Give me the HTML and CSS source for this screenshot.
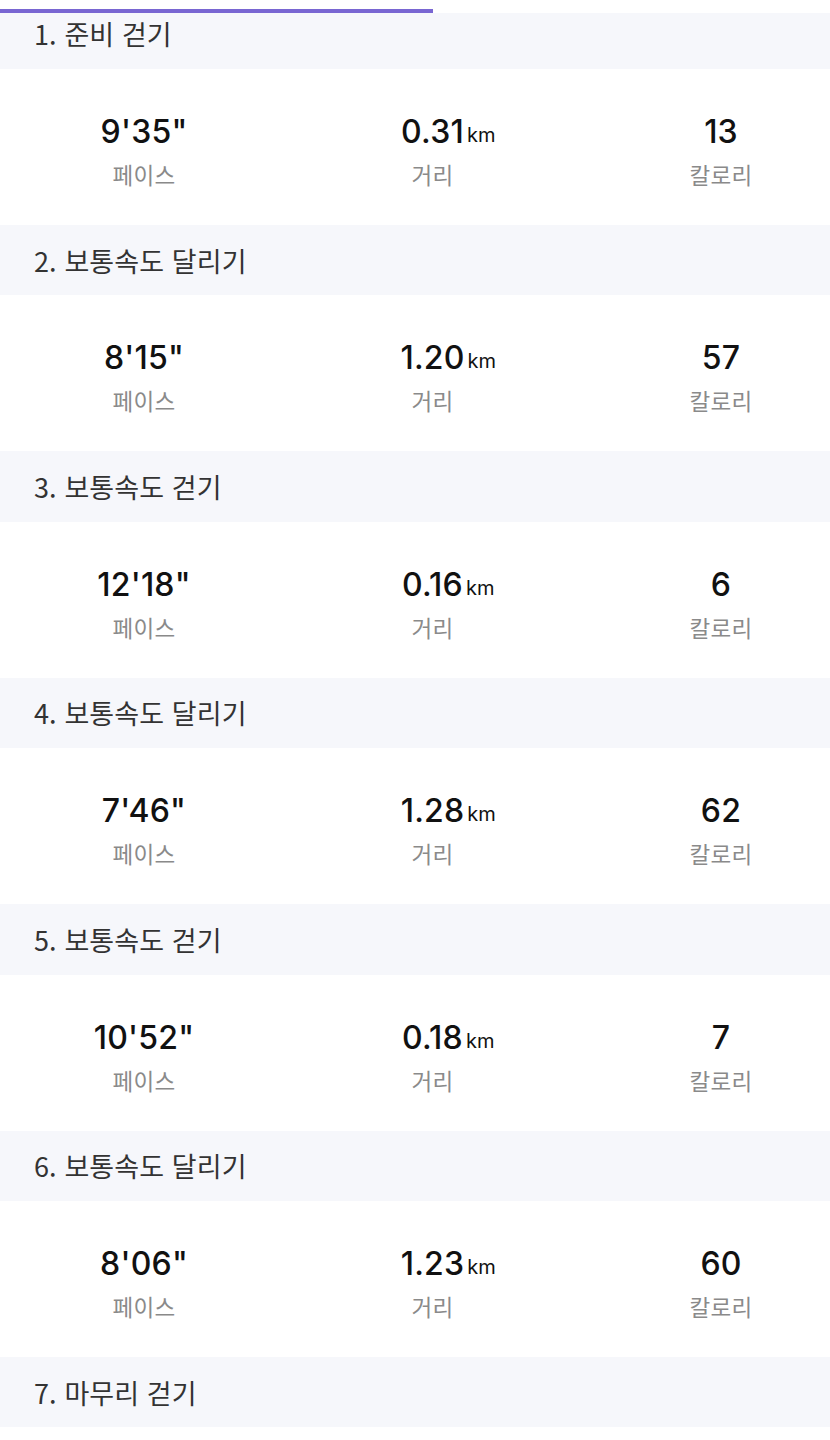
FILE: index.html
```html
<!DOCTYPE html>
<html lang="ko">
<head>
<meta charset="utf-8">
<link rel="stylesheet" href="styles.css">
</head>
<body>
<div class="topbar"><div class="progress"></div></div>
<main class="list">
  <section class="seg">
    <h2 class="seg-title">1. 준비 걷기</h2>
    <div class="stats">
      <div class="stat"><div class="val">9'35"</div><div class="lbl">페이스</div></div>
      <div class="stat"><div class="val">0.31<span class="unit">km</span></div><div class="lbl">거리</div></div>
      <div class="stat"><div class="val">13</div><div class="lbl">칼로리</div></div>
    </div>
  </section>
  <section class="seg">
    <h2 class="seg-title">2. 보통속도 달리기</h2>
    <div class="stats">
      <div class="stat"><div class="val">8'15"</div><div class="lbl">페이스</div></div>
      <div class="stat"><div class="val">1.20<span class="unit">km</span></div><div class="lbl">거리</div></div>
      <div class="stat"><div class="val">57</div><div class="lbl">칼로리</div></div>
    </div>
  </section>
  <section class="seg">
    <h2 class="seg-title">3. 보통속도 걷기</h2>
    <div class="stats">
      <div class="stat"><div class="val">12'18"</div><div class="lbl">페이스</div></div>
      <div class="stat"><div class="val">0.16<span class="unit">km</span></div><div class="lbl">거리</div></div>
      <div class="stat"><div class="val">6</div><div class="lbl">칼로리</div></div>
    </div>
  </section>
  <section class="seg">
    <h2 class="seg-title">4. 보통속도 달리기</h2>
    <div class="stats">
      <div class="stat"><div class="val">7'46"</div><div class="lbl">페이스</div></div>
      <div class="stat"><div class="val">1.28<span class="unit">km</span></div><div class="lbl">거리</div></div>
      <div class="stat"><div class="val">62</div><div class="lbl">칼로리</div></div>
    </div>
  </section>
  <section class="seg">
    <h2 class="seg-title">5. 보통속도 걷기</h2>
    <div class="stats">
      <div class="stat"><div class="val">10'52"</div><div class="lbl">페이스</div></div>
      <div class="stat"><div class="val">0.18<span class="unit">km</span></div><div class="lbl">거리</div></div>
      <div class="stat"><div class="val">7</div><div class="lbl">칼로리</div></div>
    </div>
  </section>
  <section class="seg">
    <h2 class="seg-title">6. 보통속도 달리기</h2>
    <div class="stats">
      <div class="stat"><div class="val">8'06"</div><div class="lbl">페이스</div></div>
      <div class="stat"><div class="val">1.23<span class="unit">km</span></div><div class="lbl">거리</div></div>
      <div class="stat"><div class="val">60</div><div class="lbl">칼로리</div></div>
    </div>
  </section>
  <section class="seg">
    <h2 class="seg-title">7. 마무리 걷기</h2>
  </section>
</main>
</body>
</html>
```
FILE: styles.css
```css
html, body {
  margin: 0;
  padding: 0;
  background: #ffffff;
}
body {
  font-family: "Inter", "Noto Sans CJK KR", sans-serif;
  overflow: hidden;
  height: 1440px;
}
.topbar {
  position: fixed;
  top: 0;
  left: 0;
  right: 0;
  height: 13px;
  background: #ffffff;
  z-index: 2;
}
.progress {
  position: absolute;
  left: 0;
  top: 9px;
  width: 433px;
  height: 4px;
  background: #7966d2;
}
.list {
  margin-top: -1.4px;
}
.seg-title {
  margin: 0;
  height: 70.4px;
  display: flex;
  align-items: center;
  padding-left: 34px;
  background: #f6f7fb;
  font-family: "Noto Sans CJK KR", sans-serif;
  font-weight: 400;
  font-size: 27px;
  color: #333333;
  letter-spacing: 0.1px;
  line-height: 1;
}
.stats {
  height: 156px;
  display: flex;
  justify-content: space-between;
  padding: 0 29px 0 64px;
  box-sizing: border-box;
}
.stat {
  width: 160px;
  display: flex;
  flex-direction: column;
  align-items: center;
  padding-top: 43px;
}
.val {
  position: relative;
  font-family: "Inter", sans-serif;
  font-weight: 500;
  font-size: 32px;
  line-height: 40px;
  color: #111111;
  letter-spacing: 0.2px;
}
.unit {
  position: absolute;
  left: 100%;
  bottom: 0;
  margin-left: 3px;
  font-size: 20px;
  font-weight: 400;
  line-height: 34px;
  letter-spacing: 0;
}
.lbl {
  margin-top: 5px;
  font-family: "Noto Sans CJK KR", sans-serif;
  font-size: 22.5px;
  line-height: 34px;
  letter-spacing: 0.3px;
  color: #8a8a8a;
}
```
